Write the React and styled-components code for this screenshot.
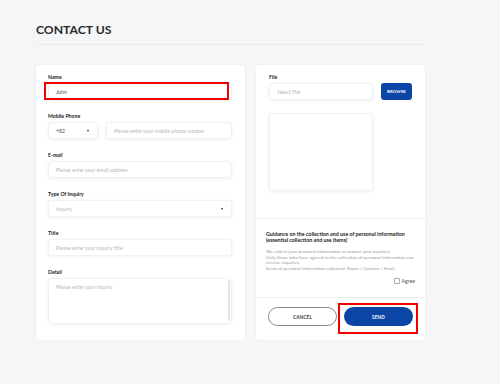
import React from "react";
import styled, { createGlobalStyle } from "styled-components";

const GlobalStyle = createGlobalStyle`
    body {
        margin: 0;
        background: #f5f6f8;
        font-family: "Lato", "Open Sans", sans-serif;
        color: #222;
    }
`

const Page = styled.div`
    width: 389px;
    padding: 22px 0 44px 36px;
`

const Header = styled.div`
    border-bottom: 1px solid #e9ebee;
    padding-bottom: 6px;

    h1{
        margin: 0;
        font-size: 12.2px;
        line-height: 16px;
        font-weight: 700;
        color: #2a2a2a;
    }
`

const Columns = styled.div`
    display: grid;
    grid-template-columns: 209px 169px;
    gap: 11px;
    margin-top: 20px;
    height: 275px;
`

const Card = styled.div`
    background: #fff;
    border-radius: 3px;
    box-shadow: 0 0 0 1px #f0f1f3;
    display: flex;
    flex-direction: column;
`

const LeftCard = styled(Card)`
    padding: 9px 13px 0 12px;
`

const Field = styled.div`
    position: relative;
    margin-bottom: 13px;
`

const Label = styled.div`
    font-size: 5.2px;
    line-height: 6px;
    font-weight: 700;
    color: #222;
    margin-bottom: 3px;
`

const Box = styled.div`
    height: 17px;
    box-sizing: border-box;
    background: #fff;
    border: 1px solid #f0f1f3;
    border-radius: 3px;
    box-shadow: 0 1px 4px rgba(0, 0, 0, 0.06);
    display: flex;
    align-items: center;
    padding: 0 7px;
    font-size: 5.2px;
    color: ${props => props.filled ? "#555" : "#b9b9b9"};
    flex: ${props => props.grow ? 1 : "none"};
    width: ${props => props.width || "auto"};
    justify-content: space-between;
`

const Arrow = styled.span`
    width: 0;
    height: 0;
    border-left: 1.5px solid transparent;
    border-right: 1.5px solid transparent;
    border-top: 2px solid #222;
    margin-right: 1px;
`

const Row = styled.div`
    display: flex;
    gap: 8px;
`

const Highlight = styled.div`
    position: absolute;
    border: 2px solid #f20000;
    pointer-events: none;
    left: ${props => props.left}px;
    right: ${props => props.right}px;
    top: ${props => props.top}px;
    bottom: ${props => props.bottom}px;
`

const DetailBox = styled.div`
    height: 46px;
    box-sizing: border-box;
    border: 1px solid #f0f1f3;
    border-radius: 3px;
    box-shadow: 0 1px 4px rgba(0, 0, 0, 0.06);
    display: flex;
    padding: 1px 1px 2px 7px;
    font-size: 5.2px;
    color: #b9b9b9;

    span{
        flex: 1;
        padding-top: 4px;
    }
`

const ScrollTrack = styled.div`
    width: 2px;
    background: #e2e2e2;
    border-radius: 1px;
`

const FileSection = styled.div`
    height: 153px;
    box-sizing: border-box;
    padding: 9px 13px;
`

const BrowseButton = styled.div`
    width: 31px;
    height: 17px;
    border-radius: 3px;
    background: #0b45a5;
    color: #fff;
    font-size: 4.3px;
    font-weight: 700;
    display: flex;
    align-items: center;
    justify-content: center;
    letter-spacing: 0.1px;
`

const Preview = styled.div`
    width: 104px;
    height: 78px;
    margin-top: 13px;
    box-sizing: border-box;
    border: 1px solid #f0f1f3;
    border-radius: 3px;
    box-shadow: 0 1px 4px rgba(0, 0, 0, 0.06);
`

const Guidance = styled.div`
    height: 79px;
    box-sizing: border-box;
    border-top: 1px solid #eceef1;
    padding: 12px 10px 0 10px;

    h4{
        margin: 0;
        font-size: 5.3px;
        line-height: 6px;
        font-weight: 700;
        color: #222;
        white-space: nowrap;
    }
    p{
        margin: 6px 0 0 0;
        font-size: 4.6px;
        line-height: 5.5px;
        color: #9a9a9a;
        white-space: nowrap;
    }
`

const AgreeRow = styled.div`
    display: flex;
    justify-content: flex-end;
    align-items: center;
    gap: 2px;
    margin-top: 7px;
    font-size: 5.2px;
    color: #555;
`

const Check = styled.span`
    width: 6px;
    height: 6px;
    box-sizing: border-box;
    border: 0.7px solid #aaa;
    border-radius: 1px;
`

const Buttons = styled.div`
    border-top: 1px solid #eceef1;
    padding: 9px 12px 0 12px;
    display: flex;
    gap: 7px;
`

const PillWrap = styled.div`
    position: relative;
    flex: 1;
`

const Pill = styled.div`
    height: 19px;
    box-sizing: border-box;
    border-radius: 10px;
    display: flex;
    align-items: center;
    justify-content: center;
    font-size: 4.6px;
    font-weight: 700;
    letter-spacing: 0.2px;
    background: ${props => props.primary ? "#0b45a5" : "#fff"};
    color: ${props => props.primary ? "#fff" : "#333"};
    border: ${props => props.primary ? "none" : "1px solid #8a8a8a"};
`

const App = () => {

    return (
        <Page>
            <GlobalStyle />
            <Header>
                <h1>CONTACT US</h1>
            </Header>
            <Columns>
                <LeftCard>
                    <Field>
                        <Label>Name</Label>
                        <div style={{ position: "relative" }}>
                            <Box filled>John</Box>
                            <Highlight left={-4} right={3} top={-1} bottom={0} />
                        </div>
                    </Field>
                    <Field>
                        <Label>Mobile Phone</Label>
                        <Row>
                            <Box filled width="50px">+82<Arrow /></Box>
                            <Box grow>Please enter your mobile phone number</Box>
                        </Row>
                    </Field>
                    <Field>
                        <Label>E-mail</Label>
                        <Box>Please enter your email address</Box>
                    </Field>
                    <Field>
                        <Label>Type Of Inquiry</Label>
                        <Box>Inquiry<Arrow /></Box>
                    </Field>
                    <Field>
                        <Label>Title</Label>
                        <Box>Please enter your inquiry title</Box>
                    </Field>
                    <Field>
                        <Label>Detail</Label>
                        <DetailBox>
                            <span>Please enter your inquiry</span>
                            <ScrollTrack />
                        </DetailBox>
                    </Field>
                </LeftCard>
                <Card>
                    <FileSection>
                        <Label>File</Label>
                        <Row>
                            <Box width="104px">Select File</Box>
                            <BrowseButton>BROWSE</BrowseButton>
                        </Row>
                        <Preview />
                    </FileSection>
                    <Guidance>
                        <h4>Guidance on the collection and use of personal information<br />(essential collection and use items)</h4>
                        <p>
                            We collect your personal information to answer your inquiries.<br />
                            Only those who have agreed to the collection of personal information can<br />
                            receive inquiries.<br />
                            Items of personal information collected: Name / Contact / Email
                        </p>
                        <AgreeRow>
                            <Check />
                            Agree
                        </AgreeRow>
                    </Guidance>
                    <Buttons>
                        <PillWrap>
                            <Pill>CANCEL</Pill>
                        </PillWrap>
                        <PillWrap>
                            <Pill primary>SEND</Pill>
                            <Highlight left={-6} right={-5} top={-4} bottom={-8} />
                        </PillWrap>
                    </Buttons>
                </Card>
            </Columns>
        </Page>
    )
}

export default App;
